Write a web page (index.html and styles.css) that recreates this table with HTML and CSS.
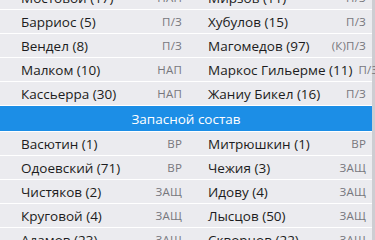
FILE: index.html
```html
<!DOCTYPE html>
<html lang="ru">
<head>
  <meta charset="UTF-8" />
  <meta name="viewport" content="width=device-width, initial-scale=1" />
  <title>Состав</title>
  <link rel="stylesheet" href="styles.css">
</head>
<body>

  <div class="lineup">
    <!-- Основной состав -->
    <div class="squad">
      <div class="player"><span class="name">Мостовой (17)</span><span class="pos">НАП</span></div>
      <div class="player"><span class="name">Мирзов (11)</span><span class="pos">П/З</span></div>

      <div class="player"><span class="name">Барриос (5)</span><span class="pos">П/З</span></div>
      <div class="player"><span class="name">Хубулов (15)</span><span class="pos">П/З</span></div>

      <div class="player"><span class="name">Вендел (8)</span><span class="pos">П/З</span></div>
      <div class="player"><span class="name">Магомедов (97)</span><span class="pos">(К)П/З</span></div>

      <div class="player"><span class="name">Малком (10)</span><span class="pos">НАП</span></div>
      <div class="player"><span class="name">Маркос Гильерме (11)</span><span class="pos">П/З</span></div>

      <div class="player"><span class="name">Кассьерра (30)</span><span class="pos">НАП</span></div>
      <div class="player"><span class="name">Жаниу Бикел (16)</span><span class="pos">П/З</span></div>
    </div>

    <div class="section-title">Запасной состав</div>

    <div class="squad">
      <div class="player"><span class="name">Васютин (1)</span><span class="pos">ВР</span></div>
      <div class="player"><span class="name">Митрюшкин (1)</span><span class="pos">ВР</span></div>

      <div class="player"><span class="name">Одоевский (71)</span><span class="pos">ВР</span></div>
      <div class="player"><span class="name">Чежия (3)</span><span class="pos">ЗАЩ</span></div>

      <div class="player"><span class="name">Чистяков (2)</span><span class="pos">ЗАЩ</span></div>
      <div class="player"><span class="name">Идову (4)</span><span class="pos">ЗАЩ</span></div>

      <div class="player"><span class="name">Круговой (4)</span><span class="pos">ЗАЩ</span></div>
      <div class="player"><span class="name">Лысцов (50)</span><span class="pos">ЗАЩ</span></div>

      <div class="player"><span class="name">Адамов (23)</span><span class="pos">ЗАЩ</span></div>
      <div class="player"><span class="name">Скворцов (22)</span><span class="pos">ЗАЩ</span></div>
    </div>
  </div>

</body>
</html>
```

FILE: styles.css
```css
* {
  margin: 0;
  padding: 0;
  box-sizing: border-box;
}
body {
  font-family: 'Open Sans', 'Noto Sans', sans-serif;
  background: #ffffff;
  color: #1e1e22;
  height: 240px;
  overflow: hidden;
  -webkit-font-smoothing: antialiased;
}

/* list is scrolled a bit, the first row is half hidden */
.lineup {
  margin-top: -14px;
  border-right: 3px solid #cdcdd2;
  display: flex;
  flex-direction: column;
  gap: 1px;
}
.squad {
  display: grid;
  grid-template-columns: 187px 185px;
  row-gap: 1px;
  background: #ffffff;
}
.player {
  height: 23px;
  background: #ebebef;
  display: flex;
  align-items: center;
  justify-content: space-between;
  gap: 6px;
  padding: 0 5px 0 21px;
}
.player:nth-child(even) {
  padding-right: 6px;
}
.name {
  font-size: 13.5px;
  color: #1c1c20;
  white-space: nowrap;
}
.pos {
  font-size: 11.5px;
  letter-spacing: 0.2px;
  color: #77777d;
  white-space: nowrap;
}

.section-title {
  height: 25px;
  background: #1c8ee6;
  color: #ffffff;
  font-size: 13.5px;
  display: flex;
  align-items: center;
  justify-content: center;
}
```
